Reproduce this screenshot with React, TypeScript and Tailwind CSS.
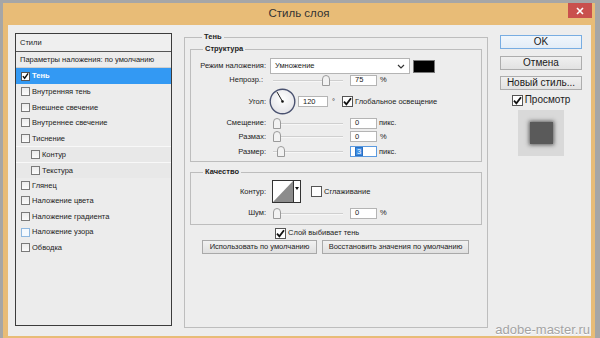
import React from "react";

function Check({ checked = false, blue = false, white = false }: { checked?: boolean; blue?: boolean; white?: boolean }) {
  return (
    <span
      className={
        "inline-flex shrink-0 items-center justify-center w-[9px] h-[9px] border " +
        (blue ? "border-[#8fb8e0] bg-[#f4f9fe]" : white ? "border-[#555] bg-white" : "border-[#7a7a7a] bg-gradient-to-b from-[#ececec] to-[#fbfbfb]")
      }
    >
      {checked && (
        <svg width="8" height="8" viewBox="0 0 8 8">
          <path d="M1 4.2 L3 6.6 L7 1" stroke="#111" strokeWidth="1.6" fill="none" />
        </svg>
      )}
    </span>
  );
}

function BigCheck({ checked = false }: { checked?: boolean }) {
  return (
    <span className="inline-flex shrink-0 items-center justify-center w-[11px] h-[11px] border border-[#555] bg-white">
      {checked && (
        <svg width="9" height="9" viewBox="0 0 9 9">
          <path d="M1 4.6 L3.4 7.4 L8 1.2" stroke="#111" strokeWidth="1.8" fill="none" />
        </svg>
      )}
    </span>
  );
}

function Slider({ thumb }: { thumb: number }) {
  return (
    <div className="relative w-[76px] h-[11px] shrink-0">
      <div className="absolute left-[3px] right-[3px] top-[5px] h-[1px] bg-[#cfcfcf]" />
      <div className="absolute left-[3px] right-[3px] top-[6px] h-[1px] bg-[#f7f7f7]" />
      <svg className="absolute top-0" style={{ left: thumb }} width="8" height="11" viewBox="0 0 8 11">
        <path d="M0.5 10.5 V4 A3.5 3.5 0 0 1 7.5 4 V10.5 Z" fill="#f2f2f2" stroke="#9a9a9a" strokeWidth="1" />
      </svg>
    </div>
  );
}

function Field({ value, focus = false, w = "w-[27px]" }: { value: string; focus?: boolean; w?: string }) {
  return (
    <div
      className={
        "h-[11px] shrink-0 bg-white border flex items-center pl-[4px] text-[7.5px] leading-none text-[#222] " +
        w +
        " " +
        (focus ? "border-[#5b9ae0]" : "border-[#b4b4b4]")
      }
    >
      {focus ? <span className="bg-[#3d8ee6] text-white px-[1px] border border-[#2a6fc0] leading-[7px]">3</span> : value}
    </div>
  );
}

function Label({ children, w = "w-[75px]" }: { children: React.ReactNode; w?: string }) {
  return <div className={"shrink-0 text-right text-[7.5px] text-[#222] " + w}>{children}</div>;
}

function Dial() {
  return (
    <svg width="27" height="27" viewBox="0 0 27 27" className="shrink-0">
      <defs>
        <radialGradient id="dg" cx="50%" cy="40%" r="60%">
          <stop offset="0%" stopColor="#ffffff" />
          <stop offset="100%" stopColor="#e4e4e8" />
        </radialGradient>
      </defs>
      <circle cx="13.5" cy="13.5" r="12.3" fill="url(#dg)" stroke="#4a5270" strokeWidth="1.4" />
      <line x1="13.5" y1="13.5" x2="8" y2="4" stroke="#222" strokeWidth="1" />
      <circle cx="13.5" cy="13.5" r="1.3" fill="#111" />
    </svg>
  );
}

function Contour() {
  return (
    <div className="flex w-[29px] h-[23px] border border-[#333] bg-white shrink-0">
      <svg width="20" height="21" viewBox="0 0 20 21">
        <polygon points="0,21 20,0 20,21" fill="#8c8c8c" />
      </svg>
      <div className="flex-1 border-l border-[#333] flex items-start justify-center pt-[6px]">
        <svg width="4" height="3" viewBox="0 0 4 3">
          <polygon points="0,0 4,0 2,3" fill="#111" />
        </svg>
      </div>
    </div>
  );
}

function SmallBtn({ children, w }: { children: React.ReactNode; w: string }) {
  return (
    <div
      className={
        "h-[14px] shrink-0 flex items-center justify-center border border-[#a9a9a9] bg-gradient-to-b from-[#f2f2f2] to-[#e0e0e0] text-[7.5px] text-[#222] " +
        w
      }
    >
      {children}
    </div>
  );
}

function BigBtn({ children, def = false }: { children: React.ReactNode; def?: boolean }) {
  return (
    <div
      className={
        "w-[82px] h-[14px] flex items-center justify-center text-[10px] leading-none text-[#1a1a1a] border " +
        (def ? "border-[#78ade2] bg-gradient-to-b from-[#f0f6fc] to-[#e3edf7]" : "border-[#adadad] bg-gradient-to-b from-[#f0f0f0] to-[#e2e2e2]")
      }
    >
      {children}
    </div>
  );
}

const styleRows: { t: string; sub?: boolean; blue?: boolean }[] = [
  { t: "Внутренняя тень" },
  { t: "Внешнее свечение" },
  { t: "Внутреннее свечение" },
  { t: "Тиснение" },
  { t: "Контур", sub: true },
  { t: "Текстура", sub: true },
  { t: "Глянец" },
  { t: "Наложение цвета" },
  { t: "Наложение градиента" },
  { t: "Наложение узора", blue: true },
  { t: "Обводка" },
];

export default function App() {
  return (
    <div className="w-[600px] h-[338px] overflow-hidden bg-[#a6a6a6] pt-[3px] pl-[3px] font-['Liberation_Sans',Arial,sans-serif]">
      <div className="w-[592px] h-[335px] bg-[#e8bc77] flex flex-col">
        {/* title bar */}
        <div className="relative h-[22px] flex items-center justify-center shrink-0">
          <span className="text-[11.5px] text-[#333] leading-none">Стиль слоя</span>
          <div className="absolute right-[3px] top-0 w-[24px] h-[15px] bg-[#c9504d] flex items-center justify-center">
            <svg width="8" height="8" viewBox="0 0 8 8">
              <path d="M1 1 L7 7 M7 1 L1 7" stroke="#fff" strokeWidth="1.6" />
            </svg>
          </div>
        </div>
        {/* client */}
        <div className="relative ml-[5px] mr-[4px] h-[311px] bg-[#ededed] flex items-start pt-[7px] pl-[7px] text-[#222]">
          {/* left styles list */}
          <div className="mt-[1px] w-[157px] h-[293px] shrink-0 border border-[#3c3c3c] bg-[#ececec] flex flex-col text-[7.5px] leading-none">
            <div className="h-[18px] border-b border-[#555] flex items-center pl-[4px] bg-[#efefef]">Стили</div>
            <div className="h-[16px] border-b border-[#cfcfcf] flex items-center pl-[4px]">Параметры наложения: по умолчанию</div>
            <div className="h-[16px] bg-[#3399f3] text-white font-bold flex items-center pl-[5px] gap-[2px]">
              <Check checked white />
              <span>Тень</span>
            </div>
            {styleRows.map((r) => (
              <div
                key={r.t}
                className={
                  "h-[15.6px] flex items-center gap-[2px] " +
                  (r.sub ? "pl-[15px] bg-[#e8e8e8] border-t border-[#f8f8f8]" : "pl-[5px]")
                }
              >
                <Check blue={r.blue} />
                <span>{r.t}</span>
              </div>
            ))}
          </div>

          {/* middle fieldset */}
          <fieldset className="ml-[12px] w-[304px] h-[296px] shrink-0 border border-[#bdbdbd] px-[5px]">
            <legend className="ml-[12px] px-[2px] text-[7.5px] font-bold leading-[10px]">Тень</legend>

            <fieldset className="mt-[2px] h-[118px] border border-[#bdbdbd]">
              <legend className="ml-[12px] px-[2px] text-[7.5px] font-bold leading-[10px]">Структура</legend>
              <div className="flex items-center h-[16px] mt-[4px]">
                <Label>Режим наложения:</Label>
                <div className="ml-[4px] w-[140px] h-[16px] bg-white border border-[#b4b4b4] flex items-center justify-between pl-[4px] pr-[4px] text-[7.5px]">
                  <span>Умножение</span>
                  <svg width="8" height="5" viewBox="0 0 8 5">
                    <path d="M1 1 L4 4 L7 1" stroke="#333" strokeWidth="1.2" fill="none" />
                  </svg>
                </div>
                <div className="ml-[3px] w-[22px] h-[13px] bg-black border border-[#777]" />
              </div>
              <div className="flex items-center h-[12px]">
                <Label w="w-[72px]">Непрозр.:</Label>
                <div className="ml-[7px]">
                  <Slider thumb={52} />
                </div>
                <div className="ml-[4px]">
                  <Field value="75" />
                </div>
                <span className="ml-[3px] text-[7.5px]">%</span>
              </div>
              <div className="flex items-center h-[31px]">
                <Label>Угол:</Label>
                <div className="ml-[3px]">
                  <Dial />
                </div>
                <div className="ml-[2px]">
                  <Field value="120" w="w-[30px]" />
                </div>
                <span className="ml-[4px] text-[7.5px] self-start mt-[10px]">°</span>
                <div className="ml-[7px] flex items-center gap-[2px]">
                  <BigCheck checked />
                  <span className="text-[7.5px]">Глобальное освещение</span>
                </div>
              </div>
              <div className="flex items-center h-[12px]">
                <Label>Смещение:</Label>
                <div className="ml-[4px]">
                  <Slider thumb={3} />
                </div>
                <div className="ml-[4px]">
                  <Field value="0" />
                </div>
                <span className="ml-[2px] text-[7.5px]">пикс.</span>
              </div>
              <div className="flex items-center h-[15px]">
                <Label>Размах:</Label>
                <div className="ml-[4px]">
                  <Slider thumb={3} />
                </div>
                <div className="ml-[4px]">
                  <Field value="0" />
                </div>
                <span className="ml-[3px] text-[7.5px]">%</span>
              </div>
              <div className="flex items-center h-[15px]">
                <Label>Размер:</Label>
                <div className="ml-[4px]">
                  <Slider thumb={7} />
                </div>
                <div className="ml-[4px]">
                  <Field value="3" focus />
                </div>
                <span className="ml-[2px] text-[7.5px]">пикс.</span>
              </div>
            </fieldset>

            <fieldset className="mt-[5px] h-[58px] border border-[#bdbdbd]">
              <legend className="ml-[12px] px-[2px] text-[7.5px] font-bold leading-[10px]">Качество</legend>
              <div className="flex items-center h-[23px] mt-[3px]">
                <Label>Контур:</Label>
                <div className="ml-[6px]">
                  <Contour />
                </div>
                <div className="ml-[10px] flex items-center gap-[2px]">
                  <BigCheck />
                  <span className="text-[7.5px]">Сглаживание</span>
                </div>
              </div>
              <div className="flex items-center h-[20px]">
                <Label>Шум:</Label>
                <div className="ml-[4px]">
                  <Slider thumb={3} />
                </div>
                <div className="ml-[4px]">
                  <Field value="0" />
                </div>
                <span className="ml-[3px] text-[7.5px]">%</span>
              </div>
            </fieldset>

            <div className="mt-[2px] h-[12px] flex items-center pl-[85px] gap-[2px]">
              <BigCheck checked />
              <span className="text-[7.5px]">Слой выбивает тень</span>
            </div>
            <div className="mt-[1px] flex gap-[5px] pl-[12px]">
              <SmallBtn w="w-[115px]">Использовать по умолчанию</SmallBtn>
              <SmallBtn w="w-[147px]">Восстановить значения по умолчанию</SmallBtn>
            </div>
          </fieldset>

          {/* right column */}
          <div className="ml-[12px] mt-[3px] w-[82px] shrink-0 flex flex-col items-center">
            <BigBtn def>OK</BigBtn>
            <div className="mt-[7px]">
              <BigBtn>Отмена</BigBtn>
            </div>
            <div className="mt-[6px]">
              <BigBtn>Новый стиль...</BigBtn>
            </div>
            <div className="mt-[4px] h-[12px] flex items-center gap-[2px]">
              <BigCheck checked />
              <span className="text-[10px] leading-none">Просмотр</span>
            </div>
            <div className="mt-[4px] w-[46px] h-[46px] bg-[#d9d9d9] flex items-center justify-center">
              <div className="w-[23px] h-[22px] bg-[#5a5a5a] shadow-[0_0_4px_1px_rgba(40,40,40,0.7)]" />
            </div>
          </div>

          <div className="absolute right-[1px] bottom-[0px] text-[13px] leading-none text-[#a3a3a3] [text-shadow:0_1px_0_#fff]">
            adobe-master.ru
          </div>
        </div>
      </div>
    </div>
  );
}
